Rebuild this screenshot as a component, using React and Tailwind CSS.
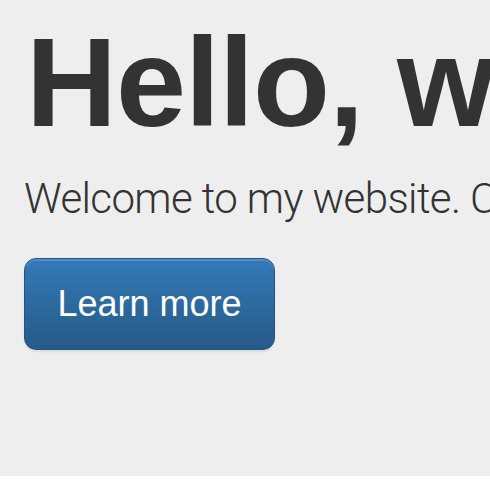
export default function App() {
  return (
    <div className="min-h-screen bg-white overflow-hidden">
      <div className="bg-[#eeeeee] h-[476px] px-[24px] pt-[13px] flex flex-col items-start">
        <h1 className="pl-[2px] text-[126px] leading-[139px] font-bold tracking-[-1px] text-[#333333] whitespace-nowrap font-['Liberation_Sans',Arial,sans-serif]">
          Hello, world!
        </h1>
        <p className="mt-[17px] text-[42px] leading-[60px] font-light tracking-[-0.6px] text-[#333333] whitespace-nowrap font-['Roboto','Liberation_Sans',sans-serif]">
          Welcome to my website. Check out my projects below.
        </p>
        <button className="mt-[29px] w-[251px] h-[92px] rounded-[12px] border border-[#245580] bg-gradient-to-b from-[#337ab7] to-[#265a88] text-white text-[36px] shadow-[inset_0_2px_0_rgba(255,255,255,0.15),0_2px_2px_rgba(0,0,0,0.075)] font-['Liberation_Sans',Arial,sans-serif]">
          Learn more
        </button>
      </div>
    </div>
  );
}
